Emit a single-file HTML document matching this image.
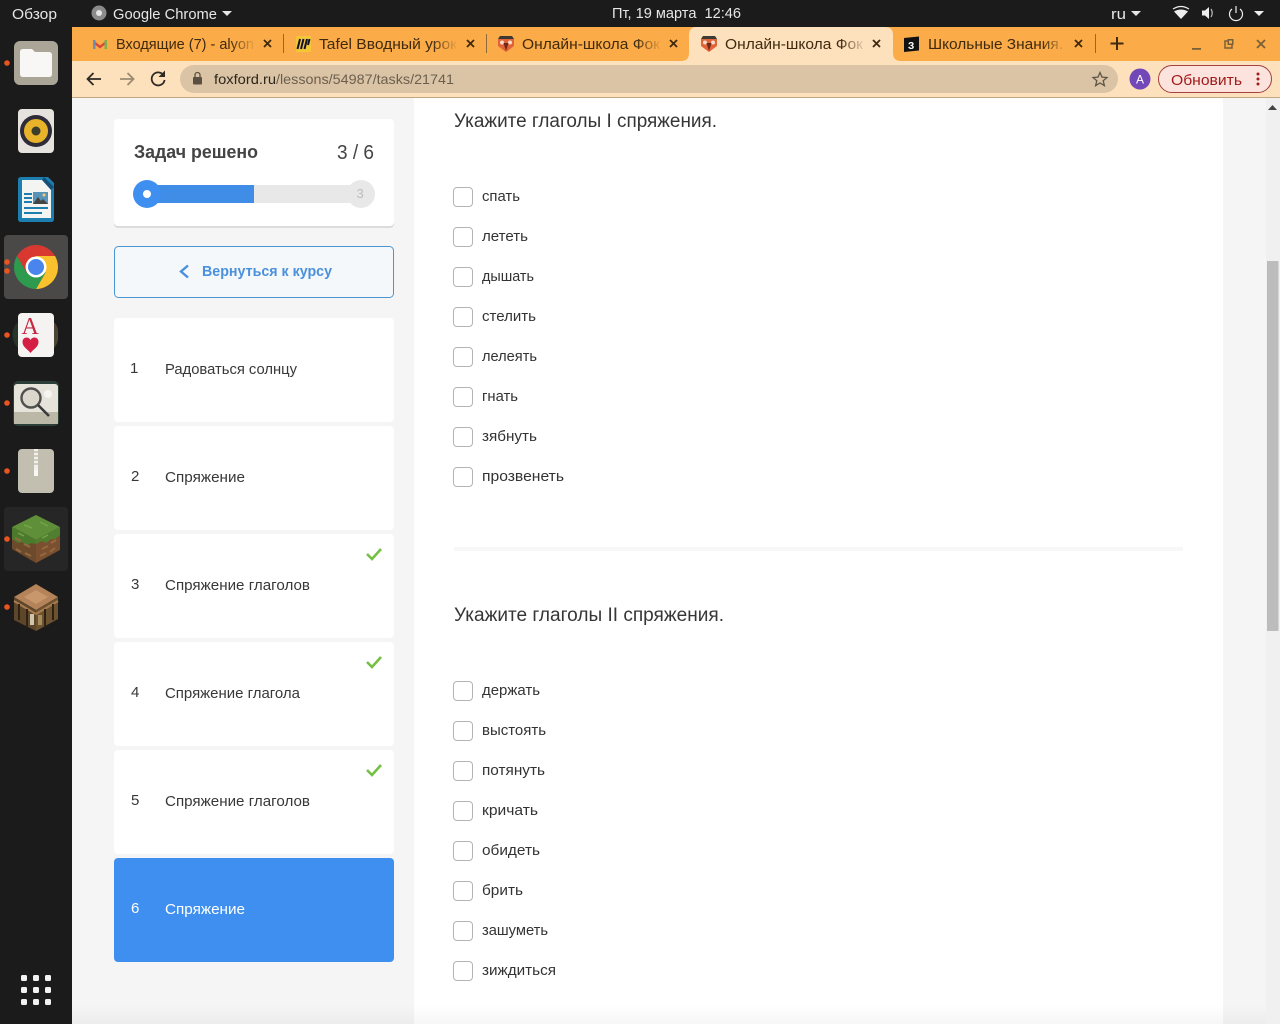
<!DOCTYPE html>
<html lang="ru"><head><meta charset="utf-8"><title>Онлайн-школа Фоксфорд</title>
<style>
html,body{margin:0;padding:0;width:1280px;height:1024px;overflow:hidden;background:#f5f5f5}
svg{display:block;font-family:"Liberation Sans","Noto Sans CJK SC",sans-serif}
.top{fill:#e6e6e6;font-size:15px}
.tab{fill:#3f2a10;font-size:15px}
.opt{fill:#333;font-size:15px}
.lab{fill:#383838;font-size:15px}
.h{fill:#363636;font-size:19px}
</style></head><body>
<svg width="1280" height="1024" viewBox="0 0 1280 1024" xmlns="http://www.w3.org/2000/svg">
<defs>
<linearGradient id="fo" x1="0" x2="1" y1="0" y2="0"><stop offset="0" stop-color="#fbab47" stop-opacity="0"/><stop offset="1" stop-color="#fbab47"/></linearGradient>
<linearGradient id="fa" x1="0" x2="1" y1="0" y2="0"><stop offset="0" stop-color="#fde0bc" stop-opacity="0"/><stop offset="1" stop-color="#fde0bc"/></linearGradient>
<linearGradient id="bt" x1="0" x2="0" y1="0" y2="1"><stop offset="0" stop-color="#000" stop-opacity="0"/><stop offset="1" stop-color="#000" stop-opacity=".035"/></linearGradient>
<g id="fox"><path d="M-8-5 L-5-6 H5 L8-5 V2 L0 8 L-8 2Z" fill="#e2623a"/><path d="M-6-8h12l2 3h-16z" fill="#3c3a34"/><circle cx="-4" cy="-1.500" r="2" fill="#f4dcc8"/><circle cx="4" cy="-1.500" r="2" fill="#f4dcc8"/><path d="M-2.500-1h5l-2.500 8z" fill="#6e2a18"/></g>
<path id="chk" d="M-7 0l5 5 9-10" fill="none" stroke="#74c044" stroke-width="2.600"/>
</defs>

<!-- page -->
<rect x="72" y="98" width="1208" height="926" fill="#f5f5f5"/>
<rect x="414" y="98" width="809" height="926" fill="#fff"/>
<rect x="1266" y="98" width="14" height="926" fill="#f0f0f0"/>
<rect x="1267" y="261" width="11.500" height="370" fill="#bcbcbc"/>
<path d="M1268 110l4.500-5 4.500 5z" fill="#444"/>

<!-- top bar -->
<rect width="1280" height="27" fill="#1c1b1b"/>
<text class="top" x="12" y="19" textLength="45" lengthAdjust="spacingAndGlyphs">Обзор</text>
<circle cx="99" cy="13" r="7.500" fill="#8b8b8b"/><circle cx="99" cy="13" r="3" fill="#e4e4e4"/>
<text class="top" x="113" y="19" textLength="104" lengthAdjust="spacingAndGlyphs">Google Chrome</text>
<path d="M222 11h10l-5 5z" fill="#e6e6e6"/>
<text class="top" x="612" y="18" textLength="129" lengthAdjust="spacingAndGlyphs" xml:space="preserve">Пт, 19 марта  12:46</text>
<text class="top" x="1111" y="19" textLength="15" lengthAdjust="spacingAndGlyphs">ru</text>
<path d="M1131 11h10l-5 5z" fill="#e6e6e6"/>
<path d="M1174 11.500q7-4 14 0l-7 7.500z" fill="#eee"/><path d="M1173 9q8-5 16 0" fill="none" stroke="#eee" stroke-width="1.200"/>
<path d="M1202 10.500h3l4-3.500v12l-4-3.500h-3z" fill="#eee"/><path d="M1211 9q2.500 4 0 8" fill="none" stroke="#bbb" stroke-width="1.200"/>
<path d="M1232 9a6.500 6.500 0 1 0 8 0" fill="none" stroke="#eee" stroke-width="1.200"/><path d="M1236 6v7" stroke="#eee" stroke-width="1.200"/>
<path d="M1254 11h10l-5 5z" fill="#eee"/>

<!-- tab strip -->
<rect x="72" y="27" width="1208" height="35" fill="#fbab47"/>
<rect x="72" y="61" width="1208" height="37" fill="#fde0bc"/>
<rect x="72" y="97" width="1208" height="1" fill="#c2a582"/>
<path d="M681 61q8 0 8-8V35q0-8 8-8h188q8 0 8 8v18q0 8 8 8z" fill="#fde0bc"/>

<!-- gmail -->
<path d="M93 40l7 5.500 7-5.500v3l-7 5.500-7-5.500z" fill="#d8483a"/><rect x="93" y="40" width="2.500" height="9" fill="#6a8fb0"/><rect x="104.500" y="40" width="2.500" height="9" fill="#7bb050"/>
<text class="tab" x="116" y="49" textLength="138" lengthAdjust="spacingAndGlyphs">Входящие (7) - alyon</text>
<rect x="230" y="34" width="26" height="20" fill="url(#fo)"/>
<path d="M264 40l7 7m0-7l-7 7" stroke="#3f2a10" stroke-width="1.800"/>
<rect x="283" y="34" width="1" height="19" fill="#8c6a3c"/>
<!-- tafel -->
<rect x="296" y="36" width="15" height="16" rx="1" fill="#f3c738"/><path d="M300 39l-2.500 10M303.500 39l-2.500 10M307 39l-2.500 10M309.500 39l-1.500 6" stroke="#14122a" stroke-width="2"/>
<text class="tab" x="319" y="49" textLength="138" lengthAdjust="spacingAndGlyphs">Tafel Вводный урок</text>
<rect x="432" y="34" width="26" height="20" fill="url(#fo)"/>
<path d="M467 40l7 7m0-7l-7 7" stroke="#3f2a10" stroke-width="1.800"/>
<rect x="486" y="34" width="1" height="19" fill="#8c6a3c"/>
<use href="#fox" x="506" y="44"/>
<text class="tab" x="522" y="49" textLength="138" lengthAdjust="spacingAndGlyphs">Онлайн-школа Фок</text>
<rect x="636" y="34" width="26" height="20" fill="url(#fo)"/>
<path d="M670 40l7 7m0-7l-7 7" stroke="#3f2a10" stroke-width="1.800"/>
<use href="#fox" x="709" y="44"/>
<text class="tab" x="725" y="49" textLength="138" lengthAdjust="spacingAndGlyphs">Онлайн-школа Фок</text>
<rect x="840" y="34" width="26" height="20" fill="url(#fa)"/>
<path d="M873 40l7 7m0-7l-7 7" stroke="#3f2a10" stroke-width="1.800"/>
<!-- znanija -->
<path d="M904 38l15-1.500v14l-15 1.500z" fill="#111"/><text x="908" y="49" font-size="10" font-weight="700" fill="#fff">З</text>
<text class="tab" x="928" y="49" textLength="135" lengthAdjust="spacingAndGlyphs">Школьные Знания.</text>
<rect x="1042" y="34" width="24" height="20" fill="url(#fo)"/>
<path d="M1075 40l7 7m0-7l-7 7" stroke="#3f2a10" stroke-width="1.800"/>
<rect x="1095" y="34" width="1" height="19" fill="#8c6a3c"/>
<path d="M1117 37v13m-6.500-6.500h13" stroke="#3f2a10" stroke-width="2"/>
<!-- window controls -->
<rect x="1192" y="48" width="9" height="1.800" fill="#7a6038"/>
<rect x="1225" y="41" width="7" height="7" fill="none" stroke="#7a6038" stroke-width="1.500"/><rect x="1227.500" y="39" width="6" height="6" fill="#7a6038"/><rect x="1229" y="40.500" width="3" height="3" fill="#fbab47"/>
<path d="M1257 40l8 8m0-8l-8 8" stroke="#7a6038" stroke-width="1.800"/>

<!-- toolbar -->
<path d="M101 79H88m5.500-6L87.500 79l6 6" fill="none" stroke="#2e2a24" stroke-width="1.800"/>
<path d="M120 79h13m-5.500-6l6 6-6 6" fill="none" stroke="#9c8a70" stroke-width="1.800"/>
<path d="M164 76a6.500 6.500 0 1 0 .6 4" fill="none" stroke="#2e2a24" stroke-width="1.800"/><path d="M165 70.500v6.500h-6.500z" fill="#2e2a24"/>
<rect x="180" y="65" width="938" height="28" rx="14" fill="#dbc4a5"/>
<rect x="193" y="77" width="9" height="7.500" rx="1" fill="#5a5040"/><path d="M195 77v-2a2.500 2.500 0 0 1 5 0v2" fill="none" stroke="#5a5040" stroke-width="1.300"/>
<text x="214" y="84" font-size="14" textLength="62" lengthAdjust="spacingAndGlyphs" fill="#2c261c">foxford.ru</text>
<text x="276" y="84" font-size="14" textLength="178" lengthAdjust="spacingAndGlyphs" fill="#6b604e">/lessons/54987/tasks/21741</text>
<path d="M1100 72.500l2 4.600 5 .4-3.800 3.200 1.200 4.900-4.400-2.600-4.400 2.600 1.200-4.900-3.800-3.200 5-.4z" fill="none" stroke="#5f5546" stroke-width="1.300"/>
<circle cx="1140" cy="79" r="10.500" fill="#7248b9"/><text x="1136" y="83.500" font-size="12" fill="#fff">A</text>
<rect x="1158.500" y="65.500" width="113" height="27" rx="13.500" fill="#fde3dd" stroke="#a5413f"/>
<text x="1171" y="85" font-size="15" textLength="71" lengthAdjust="spacingAndGlyphs" fill="#a01c1c">Обновить</text>
<circle cx="1258" cy="74" r="1.500" fill="#a01c1c"/><circle cx="1258" cy="79" r="1.500" fill="#a01c1c"/><circle cx="1258" cy="84" r="1.500" fill="#a01c1c"/>

<!-- left column -->
<rect x="114" y="120" width="280" height="108" rx="4" fill="#dcdcdc"/>
<rect x="114" y="119" width="280" height="107" rx="4" fill="#fff"/>
<text x="134" y="158" font-size="18" font-weight="700" textLength="124" lengthAdjust="spacingAndGlyphs" fill="#444">Задач решено</text>
<text x="337" y="159" font-size="20" textLength="37" lengthAdjust="spacingAndGlyphs" fill="#444">3 / 6</text>
<rect x="147" y="185" width="214" height="18" fill="#e8e8e8"/>
<rect x="147" y="185" width="107" height="18" fill="#3f8de6"/>
<circle cx="361" cy="194" r="14" fill="#e8e8e8"/>
<text x="356.500" y="198" font-size="13" fill="#bdbdbd">3</text>
<circle cx="147" cy="194" r="14" fill="#3f8ff0"/><circle cx="147" cy="194" r="4" fill="#fff"/>

<rect x="114.500" y="246.500" width="279" height="51" rx="4" fill="#f4f8fa" stroke="#4a96d4"/>
<path d="M188 265.500l-7 6 7 6" fill="none" stroke="#4a90dc" stroke-width="2.400"/>
<text x="202" y="276" font-size="15" font-weight="700" textLength="130" lengthAdjust="spacingAndGlyphs" fill="#4a90dc">Вернуться к курсу</text>

<rect x="114" y="318" width="280" height="104" rx="4" fill="#fff"/>
<rect x="114" y="426" width="280" height="104" rx="4" fill="#fff"/>
<rect x="114" y="534" width="280" height="104" rx="4" fill="#fff"/>
<rect x="114" y="642" width="280" height="104" rx="4" fill="#fff"/>
<rect x="114" y="750" width="280" height="104" rx="4" fill="#fff"/>
<rect x="114" y="858" width="280" height="104" rx="4" fill="#3f8ff0"/>

<text class="lab" x="130" y="373">1</text><text class="lab" x="165" y="374" textLength="132" lengthAdjust="spacingAndGlyphs">Радоваться солнцу</text>
<text class="lab" x="131" y="481">2</text><text class="lab" x="165" y="482" textLength="80" lengthAdjust="spacingAndGlyphs">Спряжение</text>
<text class="lab" x="131" y="589">3</text><text class="lab" x="165" y="590" textLength="145" lengthAdjust="spacingAndGlyphs">Спряжение глаголов</text>
<text class="lab" x="131" y="697">4</text><text class="lab" x="165" y="698" textLength="135" lengthAdjust="spacingAndGlyphs">Спряжение глагола</text>
<text class="lab" x="131" y="805">5</text><text class="lab" x="165" y="806" textLength="145" lengthAdjust="spacingAndGlyphs">Спряжение глаголов</text>
<text x="131" y="913" font-size="15" fill="#fff">6</text><text x="165" y="914" font-size="15" fill="#fff" textLength="80" lengthAdjust="spacingAndGlyphs">Спряжение</text>
<use href="#chk" x="374" y="554"/><use href="#chk" x="374" y="662"/><use href="#chk" x="374" y="770"/>

<!-- content -->
<text class="h" x="454" y="127" textLength="263" lengthAdjust="spacingAndGlyphs">Укажите глаголы I спряжения.</text>
<g fill="#fff" stroke="#b4b4b4" stroke-width="1">
<rect x="453.500" y="187.500" width="19" height="19" rx="3.500"/><rect x="453.500" y="227.500" width="19" height="19" rx="3.500"/><rect x="453.500" y="267.500" width="19" height="19" rx="3.500"/><rect x="453.500" y="307.500" width="19" height="19" rx="3.500"/><rect x="453.500" y="347.500" width="19" height="19" rx="3.500"/><rect x="453.500" y="387.500" width="19" height="19" rx="3.500"/><rect x="453.500" y="427.500" width="19" height="19" rx="3.500"/><rect x="453.500" y="467.500" width="19" height="19" rx="3.500"/>
<rect x="453.500" y="681.500" width="19" height="19" rx="3.500"/><rect x="453.500" y="721.500" width="19" height="19" rx="3.500"/><rect x="453.500" y="761.500" width="19" height="19" rx="3.500"/><rect x="453.500" y="801.500" width="19" height="19" rx="3.500"/><rect x="453.500" y="841.500" width="19" height="19" rx="3.500"/><rect x="453.500" y="881.500" width="19" height="19" rx="3.500"/><rect x="453.500" y="921.500" width="19" height="19" rx="3.500"/><rect x="453.500" y="961.500" width="19" height="19" rx="3.500"/>
</g>
<text class="opt" x="482" y="201" textLength="38" lengthAdjust="spacingAndGlyphs">спать</text>
<text class="opt" x="482" y="241" textLength="46" lengthAdjust="spacingAndGlyphs">лететь</text>
<text class="opt" x="482" y="281" textLength="52" lengthAdjust="spacingAndGlyphs">дышать</text>
<text class="opt" x="482" y="321" textLength="54" lengthAdjust="spacingAndGlyphs">стелить</text>
<text class="opt" x="482" y="361" textLength="55" lengthAdjust="spacingAndGlyphs">лелеять</text>
<text class="opt" x="482" y="401" textLength="36" lengthAdjust="spacingAndGlyphs">гнать</text>
<text class="opt" x="482" y="441" textLength="55" lengthAdjust="spacingAndGlyphs">зябнуть</text>
<text class="opt" x="482" y="481" textLength="82" lengthAdjust="spacingAndGlyphs">прозвенеть</text>
<rect x="454" y="547" width="729" height="4" fill="#f7f7f7"/>
<text class="h" x="454" y="621" textLength="270" lengthAdjust="spacingAndGlyphs">Укажите глаголы II спряжения.</text>
<text class="opt" x="482" y="695" textLength="58" lengthAdjust="spacingAndGlyphs">держать</text>
<text class="opt" x="482" y="735" textLength="64" lengthAdjust="spacingAndGlyphs">выстоять</text>
<text class="opt" x="482" y="775" textLength="63" lengthAdjust="spacingAndGlyphs">потянуть</text>
<text class="opt" x="482" y="815" textLength="56" lengthAdjust="spacingAndGlyphs">кричать</text>
<text class="opt" x="482" y="855" textLength="58" lengthAdjust="spacingAndGlyphs">обидеть</text>
<text class="opt" x="482" y="895" textLength="41" lengthAdjust="spacingAndGlyphs">брить</text>
<text class="opt" x="482" y="935" textLength="66" lengthAdjust="spacingAndGlyphs">зашуметь</text>
<text class="opt" x="482" y="975" textLength="74" lengthAdjust="spacingAndGlyphs">зиждиться</text>
<rect x="72" y="1005" width="1194" height="19" fill="url(#bt)"/>

<!-- dock -->
<rect x="0" y="27" width="72" height="997" fill="#1c1b1b"/>
<rect x="4" y="235" width="64" height="64" rx="4" fill="#4a4948"/>
<rect x="4" y="507" width="64" height="64" rx="4" fill="#262626"/>
<!-- files -->
<rect x="14" y="41" width="44" height="44" rx="6" fill="#aba598"/>
<path d="M20 52q0-3 3-3h9l3 3h14q3 0 3 3v19q0 3-3 3H23q-3 0-3-3z" fill="#f8f7f5"/>
<!-- rhythmbox -->
<rect x="18" y="109" width="36" height="44" rx="4" fill="#e6e2dd"/>
<circle cx="36" cy="131" r="16" fill="#2e2c38"/><circle cx="36" cy="131" r="12" fill="#e8b32a"/><circle cx="36" cy="131" r="4.500" fill="#3c3c2c"/>
<!-- writer -->
<path d="M18 180q0-3 3-3h27l6 6v36q0 3-3 3H21q-3 0-3-3z" fill="#1d7fb0"/>
<path d="M22 180h21l8 8v30H22z" fill="#f4f4f2"/><path d="M44 177l10 10-3 3-9-10z" fill="#134f78"/>
<path d="M24 193h8v2h-8zM24 197h8v2h-8zM24 201h8v2h-8zM24 207h24v2H24zM24 212h18v2H24z" fill="#1d7fb0"/>
<rect x="33" y="192" width="15" height="12" fill="#5a93b8"/><path d="M33 204l5-7 3 4 2-2 5 5z" fill="#444"/><circle cx="44" cy="195" r="1.500" fill="#f0d070"/>
<!-- chrome -->
<path d="M36 256H55.050A22 22 0 0 0 16.950 256L26.470 272.500L36 267Z" fill="#d93831"/>
<path d="M36 256H55.050A22 22 0 0 1 36 289L45.530 272.500L36 267Z" fill="#fbc02d"/>
<path d="M45.530 272.500L36 289A22 22 0 0 1 16.950 256L26.470 272.500L36 267Z" fill="#2d9a4e"/>
<circle cx="36" cy="267" r="10.500" fill="#fff"/><circle cx="36" cy="267" r="8" fill="#4a85ee"/>
<!-- cards -->
<path d="M18 322a18 18 0 0 0 0 26z" fill="#26352a"/><path d="M54 322a16 16 0 0 1 4 13 16 16 0 0 1-4 13z" fill="#4d4636"/>
<rect x="18" y="313" width="36" height="44" rx="4" fill="#f5f3f2"/>
<text x="21.500" y="334" font-size="24" font-weight="400" font-family="Liberation Serif,serif" fill="#c42a44">A</text>
<path d="M30.500 353c-3-4-8-6-8-11 0-5 6-6 8-2 2-4 8-3 8 2 0 5-5 7-8 11z" fill="#d41e44"/>
<!-- magnifier -->
<rect x="13" y="381" width="46" height="45" rx="5" fill="#2b3e38"/>
<rect x="14" y="384" width="44" height="40" rx="3" fill="#e6e3da"/><rect x="14" y="412" width="44" height="12" fill="#bcb8a8"/>
<circle cx="48" cy="394" r="4" fill="#f4f4f2"/>
<circle cx="31" cy="398" r="9.500" fill="#dbd7cd" stroke="#505050" stroke-width="2.400"/><path d="M38 405l11 11" stroke="#3a3a3a" stroke-width="2.600"/>
<!-- archive -->
<rect x="18" y="449" width="36" height="44" rx="4" fill="#c2beb0"/>
<rect x="34" y="449" width="4" height="26" fill="#f1f0ea"/><path d="M34 452h4M34 456h4M34 460h4M34 464h4" stroke="#aaa698" stroke-width="1"/>
<rect x="34" y="470" width="4" height="6" fill="#f8f8f4"/>
<!-- grass block -->
<path d="M12 527l24-12 24 12-24 13z" fill="#5f8f38"/>
<path d="M12 527l24 13v23L12 549z" fill="#6e4a2c"/><path d="M60 527l-24 13v23l24-13z" fill="#7b5030"/>
<path d="M12 527l24 13v4l-5-1-4 3-5-4-4 1-6-4z" fill="#4b7a2c"/><path d="M60 527l-24 13v4l6-3 4 2 5-4 4 0 5-4z" fill="#507f30"/>
<path d="M15 538l6 3m3 3l6 3m-14 2l5 3m4 1l6 3M42 549l6-3m3-3l5-3M40 556l6-3m4-1l5-4" stroke="#94693f" stroke-width="2"/>
<path d="M18 533l6 3M48 535l-6 3M24 525l8 3M40 522l8 4" stroke="#73a448" stroke-width="1.500"/>
<!-- crafting table -->
<path d="M14 597l22-13 22 13-22 13z" fill="#b5835a"/>
<path d="M14 597l22 13v21L14 620z" fill="#5e462a"/><path d="M58 597l-22 13v21l22-12z" fill="#6d5230"/>
<path d="M24 597l12-7 12 7-12 7z" fill="#c9976c"/>
<path d="M14 601l22 13M58 601l-22 13" stroke="#a97d4e" stroke-width="2"/>
<path d="M19 604v16M27 609v18M45 609v17M53 604v16" stroke="#2f2214" stroke-width="2"/><rect x="30" y="614" width="4" height="11" fill="#cfc4ac"/><rect x="38" y="615" width="4" height="10" fill="#a58a5c"/>
<!-- running dots -->
<g fill="#e95420"><circle cx="7" cy="63" r="2.800"/><circle cx="7" cy="262" r="2.800"/><circle cx="7" cy="271" r="2.800"/><circle cx="7" cy="335" r="2.800"/><circle cx="7" cy="403" r="2.800"/><circle cx="7" cy="471" r="2.800"/><circle cx="7" cy="539" r="2.800"/><circle cx="7" cy="607" r="2.800"/></g>
<!-- apps -->
<g fill="#f2f2f2"><rect x="21" y="975" width="6" height="6" rx="1.500"/><rect x="33" y="975" width="6" height="6" rx="1.500"/><rect x="45" y="975" width="6" height="6" rx="1.500"/><rect x="21" y="987" width="6" height="6" rx="1.500"/><rect x="33" y="987" width="6" height="6" rx="1.500"/><rect x="45" y="987" width="6" height="6" rx="1.500"/><rect x="21" y="999" width="6" height="6" rx="1.500"/><rect x="33" y="999" width="6" height="6" rx="1.500"/><rect x="45" y="999" width="6" height="6" rx="1.500"/></g>
</svg>
</body></html>
